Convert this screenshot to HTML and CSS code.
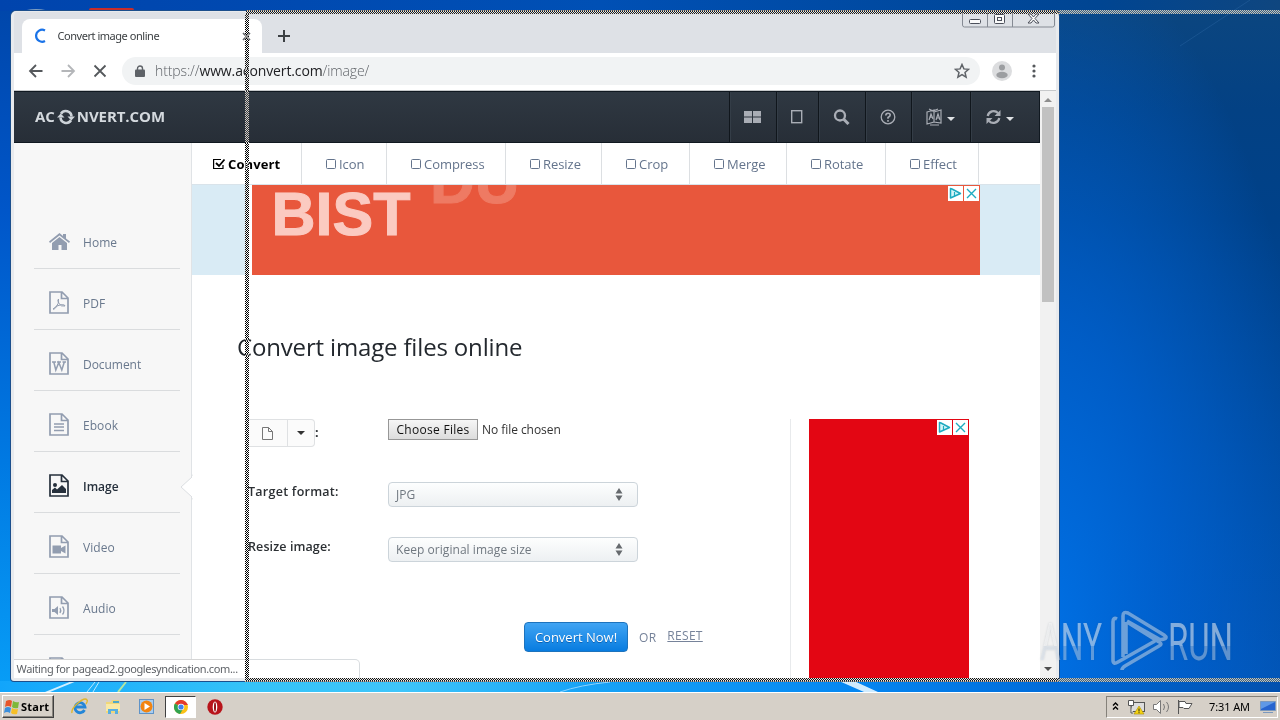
FILE: index.html
```html
<!DOCTYPE html>
<html lang="en">
<head>
<meta charset="utf-8">
<title>Convert image online</title>
<link rel="stylesheet" href="styles.css">
</head>
<body>
<svg width="0" height="0" class="defs" aria-hidden="true">
  <defs>
    <symbol id="page" viewBox="0 0 20 23"><path d="M1 1h12l6 6v15H1zM12.500 1v6.500H19" fill="none" stroke="currentColor" stroke-width="1.700"/></symbol>
    <symbol id="box" viewBox="0 0 11 11"><rect x=".5" y=".5" width="9" height="9" rx="1" fill="none" stroke="currentColor"/></symbol>
    <symbol id="sync" viewBox="0 0 16 16"><path d="M2.200 7A6 6 0 0 1 12.500 4M13.800 9A6 6 0 0 1 3.500 12" fill="none" stroke="currentColor" stroke-width="2.200"/><path d="M15 1v6H9zM1 15V9h6z" fill="currentColor"/></symbol>
    <symbol id="adchoice" viewBox="0 0 32 16"><path d="M0 1h15v15H0zM16 1h15v15H16z" fill="#fff"/><path d="M2.500 3.500v9.500L12.500 8.500 4 4z" fill="#d5f5f8" stroke="#1fabc0" stroke-width="1.500" stroke-linejoin="round"/><path d="M6.500 7v4M6.500 5v1" stroke="#1fabc0" stroke-width="1.200"/><path d="M19 4l9 9M28 4l-9 9" stroke="#1fabc0" stroke-width="1.400"/></symbol>
  </defs>
</svg>
<div class="screen">
  <div class="desktop">
    <svg class="streaks" width="1280" height="692">
      <ellipse cx="36" cy="12" rx="13" ry="3" fill="#7f9fc0"/>
      <rect x="89" y="8" width="45" height="5" rx="2" fill="#c92d2a"/>
      <path d="M45 692L72 681h5L50 692zM839 681l25 11h14l-24-11z" fill="#e6f6ff" opacity=".9"/>
      <path d="M87 692l8-10M93 692l6-10" stroke="#bce9fb" fill="none"/>
      <path d="M118 692l8-10" stroke="#b6e5a0" stroke-width="2"/>
      <path d="M560 692q20-7 50-10" stroke="#8bd2ff" fill="none"/>
      <path d="M1180 46L1250 0" stroke="#3a75b2" opacity=".3"/>
    </svg>

    <div class="window">
      <div class="tabstrip">
        <div class="tab">
          <svg width="14" height="16"><path d="M11 2.500A6 6 0 1 0 11 13" fill="none" stroke="#1a73e8" stroke-width="2.200"/></svg>
          <span class="tab-title">Convert image online</span>
          <svg class="tab-x" width="9" height="9"><path d="M1 1l7 7M8 1L1 8" stroke="#5f6368" stroke-width="1.600"/></svg>
        </div>
        <svg class="plus" width="12" height="12"><path d="M6 0v12M0 6h12" stroke="#3c4043" stroke-width="2"/></svg>
        <div class="controls">
          <svg width="93" height="16" viewBox="0 1 93 16"><path d="M.5 0v14q0 2 2 2h88q2 0 2-2V0M25.500 0v16M50.500 0v16" fill="none" stroke="#858a93"/><g fill="#fafafa" stroke="#4c505b"><rect x="7.500" y="8.500" width="11" height="4" rx="1"/><rect x="32.500" y="3.500" width="10" height="9" rx="1"/><rect x="35.500" y="6.500" width="4" height="3"/><path d="M66 3h3l2.500 3L74 3h3l-4 4.500 4 4.500h-3l-2.500-3-2.500 3h-3l4-4.500z"/></g></svg>
        </div>
      </div>
      <div class="toolbar">
        <svg class="nav" width="84" height="16"><g fill="none" stroke-width="1.800"><path d="M14.500 8H2M8 2L2 8l6 6" stroke="#55585c"/><path d="M33.500 8H46M40 2l6 6-6 6" stroke="#b4b6b9"/><path d="M66.500 2.500l11 11M77.500 2.500l-11 11" stroke="#55585c"/></g></svg>
        <div class="omnibox">
          <svg width="10" height="12"><path d="M2.500 5V3.500a2.500 2.500 0 0 1 5 0V5" fill="none" stroke="#5f6368" stroke-width="1.400"/><rect x="0" y="4.500" width="10" height="7.500" rx="1" fill="#5f6368"/></svg>
          <span class="url">https://<b>www.aconvert.com</b>/image/</span>
          <svg class="star" width="16" height="16"><path d="M8 1.500l1.900 4.400 4.700.4-3.600 3.100 1.100 4.700L8 11.600l-4.100 2.500L5 9.400 1.400 6.300l4.700-.4z" fill="none" stroke="#5f6368" stroke-width="1.500"/></svg>
        </div>
        <svg class="avatar" width="20" height="20"><circle cx="10" cy="10" r="10" fill="#dcdddf"/><circle cx="10" cy="6.500" r="3" fill="#9c9ea1"/><ellipse cx="10" cy="14" rx="5.700" ry="3.200" fill="#9c9ea1"/></svg>
        <svg class="dots" width="4" height="14"><g fill="#55585c"><circle cx="2" cy="2" r="1.600"/><circle cx="2" cy="7" r="1.600"/><circle cx="2" cy="12" r="1.600"/></g></svg>
      </div>

      <div class="viewport">
        <div class="site">
          <header class="site-head">
            <div class="brand"><span class="ac">AC</span><svg width="18" height="16" viewBox="0 0 18 16"><path d="M4 4.700A5.700 5.700 0 0 1 14.500 7.500M14 11.300A5.700 5.700 0 0 1 3.500 8.500" fill="none" stroke="#ccd2d8" stroke-width="2.600"/><path d="M10.500 7.500H18l-3.700 4zM0 8.500l3.700-4 3.800 4z" fill="#ccd2d8"/></svg><span class="nv">NVERT.COM</span></div>
            <div class="hcell c1"><svg width="17" height="14"><path d="M0 1h8v5.500H0zM9 1h8v5.500H9zM0 7.500h8V13H0zM9 7.500h8V13H9z" fill="#a9adb5"/></svg></div>
            <div class="hcell c2"><svg width="12" height="14"><rect x=".7" y=".7" width="10" height="12" fill="none" stroke="#a9adb5" stroke-width="1.400"/></svg></div>
            <div class="hcell c3"><svg width="17" height="16"><circle cx="7" cy="6.500" r="5" fill="none" stroke="#a9adb5" stroke-width="2.300"/><path d="M10.500 10l5 5" stroke="#a9adb5" stroke-width="3"/></svg></div>
            <div class="hcell c4"><svg width="16" height="16"><circle cx="8" cy="8" r="6.800" fill="none" stroke="#a9adb5" stroke-width="1.300"/><path d="M5.800 6.500q0-2.300 2.200-2.300t2.200 1.900q0 1.300-2.200 2.400v1.300M8 11v1.700" fill="none" stroke="#a9adb5" stroke-width="1.600"/></svg></div>
            <div class="hcell c5"><svg width="17" height="18"><path d="M1 4l7-2v12l-7 2zM8 4l7-2v13l-7-1zM3 1l4 2 5-2M4 17h9" fill="none" stroke="#a9adb5" stroke-width="1.200"/><path d="M3 12l2-6 2 5M3.500 9.500l3-.5M10 12l2-6 2 6M10.500 10h3" fill="none" stroke="#a9adb5" stroke-width="1.200"/></svg><i class="caret"></i></div>
            <div class="hcell c6"><svg width="17" height="16"><use href="#sync" class="grey"/></svg><i class="caret"></i></div>
          </header>
          <div class="site-body">
            <nav class="side">
              <a class="item"><svg width="22" height="20"><path d="M0 9.500L10.500 1 14 4V2h3v4.500l4 3-1 1.500-9.500-7.500L1 11z" fill="currentColor"/><path d="M10.500 5L18 11v7h-5.500v-5h-3v5H3v-7z" fill="currentColor"/></svg><span>Home</span></a>
              <a class="item"><svg width="20" height="23"><use href="#page"/><path d="M9.500 8q-1.500 1 .5 4.500 2 3.500 6 2.500.5-1.500-4-1.300-5 .8-8 4.300.5 1 2.500-1 4-5 3-9z" fill="none" stroke="currentColor" stroke-width="1"/></svg><span>PDF</span></a>
              <a class="item"><svg width="20" height="23"><use href="#page"/><path d="M3 10h4M8 10h4M13.500 10H17M4.800 10l2 8 3-7.500 3 7.500 2.500-8" fill="none" stroke="currentColor" stroke-width="1.500"/></svg><span class="doc">Document</span></a>
              <a class="item"><svg width="20" height="23"><use href="#page"/><path d="M5 11h10M5 14h10M5 17.500h10" stroke="currentColor" stroke-width="1.500"/></svg><span>Ebook</span></a>
              <a class="item active"><svg width="20" height="23"><use href="#page"/><circle cx="6" cy="11" r="2" fill="currentColor"/><path d="M3 19v-3l3-2.500 2 2 5-4.500 4 4v4z" fill="currentColor"/></svg><span>Image</span></a>
              <a class="item"><svg width="20" height="23"><use href="#page"/><path d="M3.500 10.500H12V13l4.500-2.500v8L12 16v2.500H3.500z" fill="currentColor"/></svg><span>Video</span></a>
              <a class="item"><svg width="20" height="23"><use href="#page"/><path d="M3 13h2.500L9 10v9l-3.500-3H3z" fill="currentColor"/><path d="M11 12q1.500 2.500 0 5M13.500 10.500q3 4 0 8" fill="none" stroke="currentColor" stroke-width="1.300"/></svg><span>Audio</span></a>
              <a class="item"><svg width="20" height="23"><use href="#page"/></svg></a>
            </nav>
            <svg class="notch" width="13" height="26"><path d="M12 .5V3L1 13l11 10v2.500" fill="#fff" stroke="#dcdfe2"/><path d="M13 2v22h-1V2z" fill="#fff"/></svg>
            <main class="main">
              <div class="tabs">
                <a class="t1"><svg width="13" height="12"><path d="M10 7v3.500H.6v-9H8" fill="none" stroke="#000" stroke-width="1.200"/><path d="M3 5l3 3 5.500-6.500" fill="none" stroke="#000" stroke-width="1.800"/></svg><span>Convert</span></a>
                <a class="t2"><svg width="11" height="11"><use href="#box"/></svg><span>Icon</span></a>
                <a class="t3"><svg width="11" height="11"><use href="#box"/></svg><span>Compress</span></a>
                <a class="t4"><svg width="11" height="11"><use href="#box"/></svg><span>Resize</span></a>
                <a class="t5"><svg width="11" height="11"><use href="#box"/></svg><span>Crop</span></a>
                <a class="t6"><svg width="11" height="11"><use href="#box"/></svg><span>Merge</span></a>
                <a class="t7"><svg width="11" height="11"><use href="#box"/></svg><span>Rotate</span></a>
                <a class="t8"><svg width="11" height="11"><use href="#box"/></svg><span>Effect</span></a>
              </div>
              <div class="band">
                <svg class="banner" width="728" height="90"><rect width="728" height="90" fill="#e8573c"/><text x="19.500" y="50" class="bist" textLength="139" lengthAdjust="spacingAndGlyphs">BIST</text><text x="178" y="18" class="du">DU</text><use href="#adchoice" x="696" y="0" width="32" height="16"/></svg>
              </div>
              <h1>Convert image files online</h1>
              <div class="cols">
                <form class="form">
                  <div class="row r1">
                    <div class="label"><span class="split"><span class="seg"><svg width="11" height="13"><path d="M.5.500h6l4 4v8H.5zM6.500.500v4h4" fill="none" stroke="#777"/></svg></span><span class="seg drop"><i class="caret dark"></i></span></span><span>:</span></div>
                    <span class="file-btn">Choose Files</span><span class="nofile">No file chosen</span>
                  </div>
                  <div class="row r2"><div class="label"><span class="tf">Target format:</span></div><div class="select"><span class="jpg">JPG</span><svg width="8" height="13"><path d="M4 0l3.500 5.500h-7zM4 13L.5 7.500h7z" fill="#666a6e"/></svg></div></div>
                  <div class="row r3"><div class="label"><span class="ri">Resize image:</span></div><div class="select"><span class="keep">Keep original image size</span><svg width="8" height="13"><path d="M4 0l3.500 5.500h-7zM4 13L.5 7.500h7z" fill="#666a6e"/></svg></div></div>
                  <div class="actions"><span class="go">Convert Now!</span><span class="or">OR</span><span class="reset">RESET</span></div>
                  <div class="nextbox"></div>
                </form>
                <aside class="aside"><svg class="skyscraper" width="160" height="260"><rect width="160" height="260" fill="#e30613"/><use href="#adchoice" x="128" y="0" width="32" height="16"/></svg></aside>
              </div>
            </main>
          </div>
        </div>
        <div class="scroll"><i class="up"></i><div class="thumb"></div><i class="down"></i></div>
      </div>
      <div class="status"><span>Waiting for pagead2.googlesyndication.com...</span></div>
    </div>
    <div class="drag drag-top"></div>
    <div class="drag drag-left"></div>
    <div class="drag drag-bottom"></div>
    <div class="drag-desk desk-top"></div>
    <div class="drag-desk desk-bottom"></div>
    <svg class="watermark" width="204" height="64">
      <defs><linearGradient id="wm" x1="0" y1="0" x2="0" y2="1"><stop offset=".55" stop-color="#fff" stop-opacity=".5"/><stop offset=".55" stop-color="#d8e2ee" stop-opacity=".42"/></linearGradient></defs>
      <g fill="url(#wm)" class="wm-text"><text x="4" y="51" textLength="62" lengthAdjust="spacingAndGlyphs">ANY</text><text x="132" y="51" textLength="65" lengthAdjust="spacingAndGlyphs">RUN</text></g>
      <path d="M81 10q-4-2-4 3v38q0 5 5 2l37-21M90 13v32M91 13l32 20q4 2 0 4L89 57q-3 2-3 4M87 48V7q0-5 5-3l36 22q4 3 0 4-3 1-5 0L91 12" fill="none" stroke="#cfe0f2" stroke-opacity=".5" stroke-width="3.600"/>
    </svg>
  </div>
  <div class="taskbar">
    <div class="start"><svg width="17" height="16"><path d="M2 2q4-2 6 0l-1 6q-3-2-6 0z" fill="#e8562a"/><path d="M9 2q3 2 6 1l-1 6q-4 1-6-1z" fill="#7db83a"/><path d="M1 9q3-2 6 0l-1 5q-3-2-6 0z" fill="#3c8fdc"/><path d="M8 9q3 2 6 1l-1 5q-4 1-6-1z" fill="#f6bf26"/></svg><span>Start</span></div>
    <div class="quick">
      <svg width="18" height="18"><path d="M13.500 12A5 5 0 1 1 14 9H5" fill="none" stroke="#2486d8" stroke-width="2.800"/><path d="M1 15Q0 11 7 5t9-3q1 1-1 4" fill="none" stroke="#e0b62c" stroke-width="1.400"/></svg>
      <svg width="18" height="18"><path d="M2 4h5l1-2h7v13H2z" fill="#f0d779"/><path d="M2 6h14v7H2z" fill="#f9e9a5"/><path d="M4 16v-5h10v5h-3v-3H7v3z" fill="#58aee0"/><path d="M9 4h6" stroke="#50a8c8" stroke-width="2"/></svg>
      <svg width="18" height="18"><rect x="2.500" y="1.500" width="14" height="14" fill="#a8cdf0" stroke="#5f93c8"/><circle cx="9.500" cy="8.500" r="6" fill="#f28411"/><path d="M7.500 5v7l5.500-3.500z" fill="#fff"/></svg>
    </div>
    <div class="running"><svg width="14" height="14" viewBox="0 0 14 14"><circle cx="7" cy="7" r="7" fill="#fbc116"/><path d="M7 7L1 3.500A7 7 0 0 1 13 3.500L14 5H7z" fill="#e33b2e"/><path d="M7 7L.9 3.500A7 7 0 0 0 6 14l3-5z" fill="#31a350"/><circle cx="7" cy="7" r="3.300" fill="#fff"/><circle cx="7" cy="7" r="2.600" fill="#3f82ee"/></svg></div>
    <svg class="opera" width="16" height="16"><circle cx="8" cy="8" r="7.700" fill="#b8141b"/><ellipse cx="8" cy="8" rx="2.300" ry="5.500" fill="#fff"/><ellipse cx="8" cy="8" rx="1" ry="4.700" fill="#951116"/></svg>
    <div class="tray">
      <svg width="88" height="18"><path d="M3 7.500l2.500-2.500L8 7.500M3 11.500L5.500 9 8 11.500" fill="none" stroke="#000" stroke-width="1.400"/><g fill="#fff" stroke="#555"><rect x="21.500" y="4.500" width="13" height="9" fill="#ddd"/><path d="M18.500 2.500h5v5h-5zM21 7.500V15h2"/></g><path d="M29 8l5 8H24z" fill="#f5d312" stroke="#aa8b00" stroke-width=".6"/><path d="M29 10.500v3M29 14.200v1" stroke="#222"/><path d="M43.500 6.500h3l4-4v13l-4-4h-3z" fill="#fff" stroke="#777"/><path d="M53.500 6q2 3 0 6M56.500 4q4 5 0 10" fill="none" stroke="#777"/><path d="M68.500 2v14M69 3.500h6l1 2h6l-3 5h-5l-1-1h-4z" fill="#fff" stroke="#555"/></svg>
      <span class="clock">7:31 AM</span>
      <svg width="16" height="14"><path d="M.5 1.500h15v9H.5z" fill="#2764cf" stroke="#7b98bd"/><path d="M1 2h14L1 9z" fill="#5f98e6"/><path d="M3 12.500h10" stroke="#7b98bd"/></svg>
    </div>
  </div>
</div>
</body>
</html>
```

FILE: styles.css
```css
* { box-sizing: border-box; }
body { margin: 0; font-family: "Open Sans", "Noto Sans", sans-serif; }
svg { display: block; flex: none; }
span { white-space: nowrap; }
.defs { position: absolute; }
.screen { width: 1280px; height: 720px; display: flex; flex-direction: column; overflow: hidden; }

/* desktop */
.desktop {
  position: relative; height: 692px; flex: none; overflow: hidden;
  background:
    linear-gradient(90deg, #12a5fb 0, #35c3f8 250px, #3fc5fa 400px, #18a4f7 580px, #0587f2 850px, #006ad9 1060px, #0250ae 1280px) 0 681px / 1280px 11px no-repeat,
    linear-gradient(#0047ab 0, #0056c9 200px, #0079e2 450px, #08a0f8 692px) 0 11px / 12px 670px no-repeat,
    linear-gradient(90deg, #0044ad 0, #0050b5 600px, #004592 1100px, #0f467f 1280px) 0 0 / 1280px 11px no-repeat,
    radial-gradient(ellipse 280px 700px at 1045px 640px, #0070e4 0, rgba(0,100,214,.75) 45%, rgba(0,80,175,0) 100%),
    linear-gradient(#0c467f 0, #034184 110px, #004189 220px, #004da5 520px, #0252b0 692px);
}
.streaks { position: absolute; left: 0; top: 0; }

/* browser window */
.window {
  position: absolute; left: 11px; top: 11px; width: 1048px; height: 670px;
  display: flex; flex-direction: column; overflow: hidden;
  border: 1px solid #e8eaed; border-width: 1px 3px 3px 3px; border-radius: 5px 5px 3px 3px;
  background: #fff; box-shadow: 0 0 0 1px #1c4f8c;
}
.tabstrip { height: 41px; flex: none; display: flex; background: #dee1e6; }
.tab {
  width: 240px; height: 34px; margin: 7px 0 0 8px; padding: 0 12px; border-radius: 8px 8px 0 0;
  display: flex; align-items: center; background: #fff;
}
.tab-title { margin: -1px 0 0 9.5px; font: 11px "Noto Sans", sans-serif; color: #3c4043; letter-spacing: -.46px; }
.tab-x { margin: 0 -1px 0 auto; }
.plus { margin: 18px 0 0 16px; }
.controls { margin: 0 1px 0 auto; }
.toolbar { height: 38px; flex: none; display: flex; align-items: center; background: #fff; border-bottom: 1px solid #c6c8ca; padding-bottom: 1px; }
.nav { margin-left: 14px; }
.omnibox { width: 858px; height: 28px; margin-left: 10px; padding: 0 10px 0 13px; border-radius: 14px; background: #f1f3f4; display: flex; align-items: center; }
.url { margin: -2px 0 0 10px; font: 300 14px "Open Sans", sans-serif; color: #5f6368; letter-spacing: -.12px; }
.url b { font-weight: 400; color: #202124; }
.star { margin-left: auto; }
.avatar { margin-left: 12px; }
.dots { margin-left: 20px; }
.viewport { flex: 1; min-height: 0; display: flex; background: #fff; }
.site { width: 1026px; flex: none; display: flex; flex-direction: column; overflow: hidden; }

/* site header */
.site-head { height: 52px; flex: none; display: flex; background: linear-gradient(#2f3842, #272e37); border: 1px solid #101820; border-left: 0; }
.brand { flex: 1; display: flex; align-items: center; padding: 0 0 1px 21px; font-weight: 700; font-size: 15px; color: #d4d9de; letter-spacing: -.07px; }
.brand span { margin-top: -2px; }
.brand svg { margin: 0 2px; }
.hcell { display: flex; align-items: center; justify-content: center; gap: 4px; border-left: 1px solid #10161c; box-shadow: inset 1px 0 #343d47; padding: 0 1px 0 0; }
.c1 { width: 47px; } .c2 { width: 42px; } .c3 { width: 47px; } .c4 { width: 46px; } .c5 { width: 59px; }
.c6 { width: 69px; padding-right: 11px; }
.grey { color: #a9adb5; }
.caret { border: 4px solid transparent; border-top-color: #dfe2e5; border-bottom: 0; margin-top: 3px; }
.caret.dark { border-top-color: #333; margin: 0; }

/* sidebar */
.site-body { flex: 1; min-height: 0; display: flex; position: relative; }
.side { width: 178px; flex: none; padding: 65px 11px 0 20px; background: #f7f7f7; border-right: 1px solid #e0e3e6; overflow: hidden; }
.item { height: 61px; display: flex; align-items: center; padding: 7px 0 0 15px; border-bottom: 1px solid #dadcde; color: #929db0; }
.item span { margin: 1px 0 0 14px; font-size: 12px; color: #69788d; letter-spacing: .05px; }
.item .doc { letter-spacing: -.05px; }
.item:first-child span { margin-left: 12px; }
.item.active { color: #26303c; }
.item.active span { color: #26303c; font-weight: 600; letter-spacing: 0; }
.notch { position: absolute; left: 166px; top: 331px; }

/* main */
.main { flex: 1; min-width: 0; display: flex; flex-direction: column; overflow: hidden; background: #fff; }
.tabs { height: 42px; flex: none; display: flex; border-bottom: 1px solid #d9e3ea; }
.tabs a { display: flex; align-items: center; padding: 0 0 0 24px; border-right: 1px solid #dcdfe2; font-size: 13px; color: #64748c; }
.tabs svg { margin-top: 1px; }
.tabs span { margin-left: 2px; letter-spacing: -.05px; }
.tabs .t1 { width: 110px; padding-left: 21px; font-weight: 700; color: #000; }
.tabs .t1 span { letter-spacing: .1px; }
.tabs .t1 svg { margin-top: 0; }
.t2 { width: 85px; } .t3 { width: 119px; } .t4 { width: 96px; } .t5 { width: 88px; } .t6 { width: 97px; } .t7 { width: 99px; } .t8 { width: 93px; }
.band { height: 90px; flex: none; background: #d9ebf5; padding-left: 54px; }
.banner { box-sizing: content-box; border-left: 6px solid #fff; }
.bist, .du { font: 700 62px "Liberation Sans", sans-serif; fill: #fbcac1; stroke: #fbcac1; stroke-width: 1px; }
.du { fill: #ee7a63; stroke: #ee7a63; }
h1 { margin: 55px 0 0 45px; height: 34px; flex: none; font-size: 24px; line-height: 33px; font-weight: 400; color: #23282e; white-space: nowrap; letter-spacing: -.16px; }
.cols { display: flex; margin-top: 55px; flex: 1; min-height: 0; }
.form { width: 599px; flex: none; padding-left: 56px; border-right: 1px solid #e8eaec; display: flex; flex-direction: column; }
.row { display: flex; flex: none; align-items: flex-start; }
.r1 { height: 63px; } .r2, .r3 { height: 55px; }
.label { width: 140px; flex: none; display: flex; font-size: 12.5px; line-height: 20px; font-weight: 600; color: #2c3034; }
.tf { letter-spacing: .26px; }
.ri { letter-spacing: .1px; }
.r1 .label { line-height: 28px; font-weight: 700; }
.split { display: flex; width: 67px; height: 28px; border: 1px solid #dfe1e3; border-left: 0; border-radius: 0 4px 4px 0; background: #fbfbfb; }
.seg { width: 39px; display: flex; align-items: center; justify-content: center; }
.drop { width: 27px; border-left: 1px solid #dfe1e3; }
.file-btn { width: 90px; height: 21px; border: 1px solid #979797; background: linear-gradient(#f6f6f6, #dcdcdc); font-size: 12px; line-height: 19px; text-align: center; color: #111; letter-spacing: .3px; }
.nofile { margin-left: 4px; font-size: 12px; line-height: 21px; color: #333; letter-spacing: -.05px; }
.select { width: 250px; height: 25px; padding: 0 14px 0 7px; border: 1px solid #ccd4da; border-radius: 4px; background: linear-gradient(#fdfefe, #edf0f2); display: flex; align-items: center; justify-content: space-between; font-size: 12px; color: #707880; }
.keep { letter-spacing: .05px; }
.actions { display: flex; height: 30px; margin: 30px 0 7px 276px; flex: none; align-items: center; font-size: 12px; color: #76839a; }
.go { width: 104px; height: 30px; border: 1px solid #1d73bd; border-radius: 4px; background: linear-gradient(#40a4f3, #087ce0); color: #fff; font-size: 13px; line-height: 28px; text-align: center; text-shadow: 0 1px #0a61b3; }
.or { margin-left: 11px; letter-spacing: .3px; }
.reset { margin: -3px 0 0 11px; text-decoration: underline; letter-spacing: .3px; }
.nextbox { width: 112px; height: 30px; flex: none; border: 1px solid #d8dcdf; border-left: 0; border-radius: 0 5px 0 0; }
.aside { padding-left: 18px; }

/* scrollbar */
.scroll { width: 16px; display: flex; flex-direction: column; align-items: center; background: #f1f1f1; padding: 7px 0; }
.up { border: 4px solid transparent; border-bottom-color: #8e8e8e; border-top: 0; }
.down { border: 4px solid transparent; border-top-color: #505050; border-bottom: 0; margin-top: auto; }
.thumb { width: 12px; height: 195px; margin-top: 5px; background: #c1c1c1; }

.status { position: absolute; left: -1px; bottom: 0; width: 234px; height: 19px; padding-left: 3.5px; border-top: 1px solid #d5d5d5; background: #fff; font: 11px/18px "Noto Sans", sans-serif; color: #5f6368; letter-spacing: -.36px; }

/* outline of the window being moved */
.drag { position: absolute; background: repeating-conic-gradient(#fff 0 25%, #000 0 50%) 0 0 / 2px 2px; mix-blend-mode: difference; }
.drag-top { left: 246px; top: 10px; width: 813px; height: 4px; }
.drag-left { left: 245px; top: 14px; width: 4px; height: 664px; }
.drag-bottom { left: 245px; top: 678px; width: 814px; height: 4px; }
.drag-desk { position: absolute; left: 1059px; width: 221px; height: 4px; background: repeating-conic-gradient(#c9c4b4 0 25%, #34608c 0 50%) 0 0 / 2px 2px; }
.desk-top { top: 10px; }
.desk-bottom { top: 678px; }

.watermark { position: absolute; left: 1036px; top: 609px; filter: drop-shadow(0 0 1px rgba(60,80,100,.35)); }
.wm-text { font: 52px "Roboto", sans-serif; }

/* taskbar */
.taskbar { height: 28px; flex: none; display: flex; align-items: center; background: #d6d0c8; border-top: 1px solid #fff; padding: 0 2px; }
.start { width: 52px; height: 23px; display: flex; align-items: center; border: 1px solid; border-color: #fff #404040 #404040 #fff; box-shadow: inset -1px -1px #89857e; }
.start svg { margin-left: 1px; }
.start span { font: 700 11px "Noto Sans", sans-serif; color: #000; letter-spacing: .25px; }
.quick { display: flex; margin-left: 17px; gap: 15px; }
.running { margin-left: 10px; width: 31px; height: 22px; display: flex; align-items: center; justify-content: center; background: #fff; border: 1px solid; border-color: #404040 #fff #fff #404040; }
.opera { margin-left: 11px; }
.tray { margin-left: auto; width: 172px; height: 22px; display: flex; align-items: center; padding: 0 1px 0 3px; border: 1px solid; border-color: #85817a #fff #fff #85817a; }
.clock { margin-left: auto; margin-right: 10px; font: 11px "Noto Sans", sans-serif; color: #000; letter-spacing: -.1px; }
```
